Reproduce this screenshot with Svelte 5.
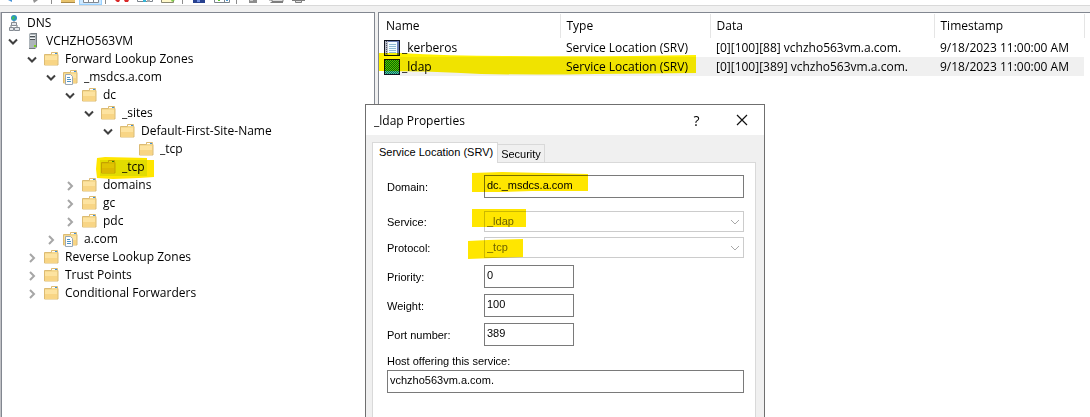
<script lang="ts">
  interface TreeNode {
    label: string;
    level: number;
    icon: 'dns' | 'server' | 'folder' | 'zone';
    open?: boolean;
    marked?: boolean;
  }

  interface DnsRecord {
    name: string;
    type: string;
    data: string;
    timestamp: string;
    selected?: boolean;
  }

  const nodes: TreeNode[] = [
    { label: 'DNS', level: 0, icon: 'dns' },
    { label: 'VCHZHO563VM', level: 1, icon: 'server', open: true },
    { label: 'Forward Lookup Zones', level: 2, icon: 'folder', open: true },
    { label: '_msdcs.a.com', level: 3, icon: 'zone', open: true },
    { label: 'dc', level: 4, icon: 'folder', open: true },
    { label: '_sites', level: 5, icon: 'folder', open: true },
    { label: 'Default-First-Site-Name', level: 6, icon: 'folder', open: true },
    { label: '_tcp', level: 7, icon: 'folder' },
    { label: '_tcp', level: 5, icon: 'folder', marked: true },
    { label: 'domains', level: 4, icon: 'folder', open: false },
    { label: 'gc', level: 4, icon: 'folder', open: false },
    { label: 'pdc', level: 4, icon: 'folder', open: false },
    { label: 'a.com', level: 3, icon: 'zone', open: false },
    { label: 'Reverse Lookup Zones', level: 2, icon: 'folder', open: false },
    { label: 'Trust Points', level: 2, icon: 'folder', open: false },
    { label: 'Conditional Forwarders', level: 2, icon: 'folder', open: false },
  ];

  const records: DnsRecord[] = [
    {
      name: '_kerberos',
      type: 'Service Location (SRV)',
      data: '[0][100][88] vchzho563vm.a.com.',
      timestamp: '9/18/2023 11:00:00 AM',
    },
    {
      name: '_ldap',
      type: 'Service Location (SRV)',
      data: '[0][100][389] vchzho563vm.a.com.',
      timestamp: '9/18/2023 11:00:00 AM',
      selected: true,
    },
  ];

  let domain = $state('dc._msdcs.a.com');
  let priority = $state('0');
  let weight = $state('100');
  let port = $state('389');
  let host = $state('vchzho563vm.a.com.');
</script>

{#snippet nodeIcon(kind: TreeNode['icon'])}
  <svg class="node-icon" width="16" height="16" viewBox="0 0 16 16" aria-hidden="true">
    {#if kind === 'dns'}
      <circle cx="9" cy="3" r="3" fill="#2b8fc4" />
      <path d="M7 2l2-1 1 1-1 2-2 1zM10 4l1-1v2z" fill="#3fbf5f" />
      <path d="M9 6v3M6 12v-2h6v2" fill="none" stroke="#777c82" />
      <path d="M6.500 7.500h5v3h-5zM4.500 12.500h4v3h-4zM9.500 12.500h5v3h-5z" fill="#e4e7eb" stroke="#858b93" />
    {:else if kind === 'server'}
      <path d="M5 1l2-1h6v14l-2 2H5z" fill="#747b80" />
      <path d="M5 1h7v14H5z" fill="#aeb5ba" />
      <path d="M6 2h5v1H6zM6 5h5v1H6z" fill="#f3f5f6" />
      <path d="M6 3h5v1H6zM6 6h5v1H6z" fill="#4b5054" />
      <path d="M10 12h2v2h-2z" fill="#7bd321" />
    {:else}
      <path d="M1.500 3.500h7v-2h6v2h.5v10.500H1.500z" fill="#f5d98f" stroke="#dcbb73" />
      <path d="M2 5h12v9H2z" fill="#fde3a0" />
      <path d="M2 9h12v5H2z" fill="#f8d585" />
      <path d="M9 2h5v1H9z" fill="#fff" />
      <path d="M12 2h2v1h-2z" fill="#3d8fd9" />
      {#if kind === 'zone'}
        <path d="M3.500 5.500h5l2 2v8h-7z" fill="#fff" stroke="#9aa8b5" />
        <path d="M5 8.500h3M5 10.500h4M5 12.500h4" stroke="#4b92c6" />
      {/if}
    {/if}
  </svg>
{/snippet}

<div class="console">
  <div class="toolbar" role="toolbar" aria-label="Console">
    <button aria-label="Back">
      <svg width="16" height="5"><path d="M2 0h4v2L2 0z" fill="#4a94d8" /></svg>
    </button>
    <button aria-label="Forward">
      <svg width="16" height="5"><path d="M4 0h5L5 3z" fill="#929292" /></svg>
    </button>
    <span class="sep"></span>
    <button aria-label="Up one level">
      <svg width="16" height="5"><path d="M1 0h14v3H1z" fill="#e8c36c" /><path d="M1 2h14v1H1z" fill="#a98845" /></svg>
    </button>
    <button class="pressed" aria-label="Show or hide console tree">
      <svg width="16" height="5"><path d="M.5 0v2.500h15V0M5.500 0v3M10.500 0v3" fill="#fff" stroke="#818890" /></svg>
    </button>
    <span class="sep"></span>
    <button aria-label="Delete">
      <svg width="16" height="5"><path d="M1 0h5l-1 2H3zM10 0h5l-1 2h-3z" fill="#d92727" /></svg>
    </button>
    <button aria-label="Properties">
      <svg width="16" height="5"><path d="M.5 0v1.500h15V0" fill="#fff" stroke="#7b838b" /><path d="M6 0h3v2H6z" fill="#34b4d5" /><path d="M10 0h3v2h-3z" fill="#aaa" /></svg>
    </button>
    <button aria-label="Export list">
      <svg width="16" height="5"><path d="M1.500 0v2.500h12V0" fill="#fff8ca" stroke="#8a8871" /><path d="M11 0h4l-3 2z" fill="#7ccb4c" /></svg>
    </button>
    <span class="sep"></span>
    <button aria-label="Help">
      <svg width="16" height="5"><path d="M2 0h12v3H2z" fill="#27418f" /><path d="M6 0h3v2H6z" fill="#718fe2" /></svg>
    </button>
    <button aria-label="New window">
      <svg width="16" height="5"><path d="M.5 0v2.500h15V0M10.500 0v3" fill="#fff" stroke="#7b838b" /><path d="M4 0h2v1H4z" fill="#5dcc26" /><path d="M12 0h2v1h-2z" fill="#4b9ad5" /></svg>
    </button>
    <span class="sep"></span>
    <button aria-label="Record">
      <svg width="16" height="5"><path d="M4 0h8v3H4z" fill="#8d8d8d" /><path d="M5 0h3v1H5z" fill="#ccc" /></svg>
    </button>
    <button aria-label="Zone">
      <svg width="16" height="5"><path d="M1 0h3v1.500h11V0M2.500 2.500H15" fill="#ddd" stroke="#7e7e7e" /></svg>
    </button>
    <button aria-label="Server">
      <svg width="16" height="5"><path d="M1 .5h13M4.500 0v2.500h6V0" fill="#ddd" stroke="#7e7e7e" /></svg>
    </button>
  </div>

  <div class="panes">
    <ul class="tree" role="tree">
      {#each nodes as node}
        <li
          role="treeitem"
          aria-selected={node.marked ?? false}
          aria-expanded={node.open}
          style="padding-left: {node.level === 0 ? 3 : node.level * 19 - 16}px"
        >
          {#if node.level > 0}
            <svg class="chevron" width="16" height="16" viewBox="0 0 16 16" aria-hidden="true">
              {#if node.open}
                <path d="M4 6.500l4 4 4-4" stroke="#404040" />
              {:else if node.open === false}
                <path d="M6 5l4 4-4 4" stroke="#a6a6a6" />
              {/if}
            </svg>
          {/if}
          <span class="node">
            {@render nodeIcon(node.icon)}
            <span class="label">{node.label}</span>
            {#if node.marked}
              <svg class="marker tree-marker" viewBox="0 0 58 22" preserveAspectRatio="none" aria-hidden="true">
                <path d="M1 1l8-1 42 1v2h7v17l-15 1-26 1-16-1-1-9z" fill="#ffe600" />
                <path d="M4 3h47v16H4z" fill="#e2dc00" />
              </svg>
            {/if}
          </span>
        </li>
      {/each}
    </ul>

    <div class="list">
      <table>
        <thead>
          <tr>
            <th class="col-name">Name</th>
            <th class="col-type">Type</th>
            <th class="col-data">Data</th>
            <th class="col-time">Timestamp</th>
          </tr>
        </thead>
        <tbody>
          {#each records as record}
            <tr class:selected={record.selected}>
              <td class="name">
                <span class="record">
                  <svg width="16" height="16" viewBox="0 0 16 16" aria-hidden="true">
                    <path d="M0 0h16v16H0z" fill="#10131f" />
                    <path d="M1 1h14v14H1z" fill="#6d7fb5" />
                    <path d="M4 2h9v13H4z" fill="#f4fbff" />
                    <path d="M1 1h3v14H1z" fill="#b9bdc9" />
                    <path d="M5 4.500h7M5 6.500h7M5 8.500h7M5 10.500h7M5 12.500h7" stroke="#8fb9d3" />
                    <path d="M2.500 1v14" stroke="#4d5164" stroke-dasharray="1 1" />
                    {#if record.selected}
                      <path d="M1 1h14v14H1z" fill="#5fc0a0" />
                      {#each [1, 3, 5, 7, 9, 11, 13] as y}
                        <path d="M1 {y + 0.5}h14M2 {y + 1.5}h13" stroke="#00785f" stroke-dasharray="1 1" />
                      {/each}
                    {/if}
                  </svg>
                  <span>{record.name}</span>
                </span>
                {#if record.selected}
                  <svg class="marker row-marker" viewBox="0 0 317 22" preserveAspectRatio="none" aria-hidden="true">
                    <path d="M0 0h20q50 3 105 3 100 1 192-1v18l-100 1q-60 1-115 0-50-3-102-3z" fill="#fff200" />
                  </svg>
                {/if}
              </td>
              <td>{record.type}</td>
              <td>{record.data}</td>
              <td>{record.timestamp}</td>
            </tr>
          {/each}
        </tbody>
      </table>
    </div>
  </div>

  <div class="dialog" role="dialog" aria-labelledby="dialog-title">
    <header>
      <h1 id="dialog-title">_ldap Properties</h1>
      <button class="caption" aria-label="Help">?</button>
      <button class="caption" aria-label="Close">
        <svg width="12" height="12" viewBox="0 0 12 12">
          <path d="M1 1l10 10M11 1L1 11" stroke="#111" stroke-width="1.200" />
        </svg>
      </button>
    </header>

    <div class="body">
      <div class="tabs" role="tablist">
        <button class="tab active" role="tab" aria-selected="true">Service Location (SRV)</button>
        <button class="tab" role="tab" aria-selected="false">Security</button>
      </div>

      <div class="page" role="tabpanel">
        <div class="row domain">
          <label for="domain">Domain:</label>
          <div class="field wide">
            <input id="domain" type="text" bind:value={domain} />
            <svg class="marker domain-marker" viewBox="0 0 116 20" preserveAspectRatio="none" aria-hidden="true">
              <path d="M0 1l30-1 86 2v17H60L30 20H0z" fill="#ffe600" />
            </svg>
          </div>
        </div>
        <div class="row combo">
          <label for="service">Service:</label>
          <div class="field wide">
            <select id="service" disabled><option>_ldap</option></select>
            <svg class="arrow" width="10" height="6" viewBox="0 0 10 6" aria-hidden="true">
              <path d="M1 1l4 4 4-4" />
            </svg>
            <svg class="marker service-marker" viewBox="0 0 54 18" preserveAspectRatio="none" aria-hidden="true">
              <path d="M0 0h54v18H0z" fill="#ffe600" />
            </svg>
          </div>
        </div>
        <div class="row combo protocol">
          <label for="protocol">Protocol:</label>
          <div class="field wide">
            <select id="protocol" disabled><option>_tcp</option></select>
            <svg class="arrow" width="10" height="6" viewBox="0 0 10 6" aria-hidden="true">
              <path d="M1 1l4 4 4-4" />
            </svg>
            <svg class="marker protocol-marker" viewBox="0 0 55 20" preserveAspectRatio="none" aria-hidden="true">
              <path d="M0 2l20-1 35-1v18l-30 1-25 1z" fill="#ffe600" />
            </svg>
          </div>
        </div>
        <div class="row">
          <label for="priority">Priority:</label>
          <div class="field"><input id="priority" type="text" bind:value={priority} /></div>
        </div>
        <div class="row">
          <label for="weight">Weight:</label>
          <div class="field"><input id="weight" type="text" bind:value={weight} /></div>
        </div>
        <div class="row">
          <label for="port">Port number:</label>
          <div class="field"><input id="port" type="text" bind:value={port} /></div>
        </div>
        <div class="host">
          <label for="host">Host offering this service:</label>
          <input id="host" type="text" bind:value={host} />
        </div>
      </div>
    </div>
  </div>
</div>

<style>
  :global(body) {
    margin: 0;
  }

  .console {
    position: relative;
    display: flex;
    flex-direction: column;
    height: 100vh;
    overflow: hidden;
    background: #f0f0f0;
    color: #000000;
    font-family: 'Open Sans', 'Noto Sans', sans-serif;
    font-size: 12px;
  }

  .console * {
    box-sizing: border-box;
  }

  button {
    padding: 0;
    border: none;
    background: none;
    color: inherit;
    font: inherit;
  }

  .toolbar {
    display: flex;
    flex-shrink: 0;
    height: 6px;
    padding-left: 2px;
    overflow: hidden;
    background: #ffffff;
    border-bottom: 1px solid #d9d9d9;
  }

  .toolbar button {
    display: flex;
    justify-content: center;
    width: 23px;
    height: 5px;
  }

  .toolbar .pressed {
    background: #cce8ff;
    border: solid #99d1ff;
    border-width: 0 1px 1px;
  }

  .sep {
    width: 1px;
    height: 4px;
    margin: 0 4px 0 3px;
    background: #8d8d8d;
  }

  .panes {
    display: flex;
    flex: 1;
    gap: 3px;
    min-height: 0;
    margin-top: 6px;
    padding-left: 1px;
    background: linear-gradient(to right, #c0c1c5 1px, #f0f0f0 1px);
  }

  .tree {
    flex: 0 0 374px;
    margin: 0;
    padding: 1px 0 0;
    overflow: hidden;
    list-style: none;
    background: #ffffff;
    border: 1px solid #828790;
    border-bottom: none;
  }

  .tree li {
    display: flex;
    align-items: center;
    gap: 3px;
    height: 18px;
  }

  .node {
    position: relative;
    display: flex;
    align-items: center;
    gap: 6px;
  }

  .label {
    line-height: 18px;
    white-space: nowrap;
  }

  .chevron {
    fill: none;
    stroke-width: 2;
  }

  .marker {
    position: absolute;
    mix-blend-mode: multiply;
    pointer-events: none;
  }

  .tree-marker {
    left: -4px;
    top: -1px;
    width: 58px;
    height: 22px;
  }

  .list {
    flex: 1;
    min-width: 0;
    padding-top: 1px;
    overflow: hidden;
    background: #ffffff;
    border: solid #828790;
    border-width: 1px 0 0 1px;
  }

  table {
    border-collapse: collapse;
    table-layout: fixed;
    width: 705px;
  }

  th,
  td {
    height: 19px;
    padding: 0 0 0 6px;
    line-height: 18px;
    font-weight: 400;
    text-align: left;
    white-space: nowrap;
  }

  th {
    height: 24px;
    border-right: 1px solid #e5e5e5;
  }

  .col-name {
    width: 181px;
    padding-left: 7px;
  }

  .col-type {
    width: 150px;
  }

  .col-data {
    width: 224px;
  }

  .col-time {
    width: 150px;
  }

  .selected td {
    background: #f0f0f0;
  }

  td.name {
    position: relative;
    padding-left: 5px;
  }

  .selected td.name {
    background: linear-gradient(to right, #ffffff 21px, #f0f0f0 21px);
  }

  .record {
    display: flex;
    align-items: center;
    gap: 2px;
  }

  .row-marker {
    z-index: 1;
    left: 0;
    top: -4px;
    width: 317px;
    height: 22px;
  }

  .dialog {
    position: absolute;
    z-index: 2;
    left: 365px;
    top: 104px;
    bottom: 0;
    display: flex;
    flex-direction: column;
    width: 400px;
    background: #f0f0f0;
    border: 1px solid #6f6f6f;
    border-bottom: none;
  }

  header {
    display: flex;
    align-items: center;
    height: 30px;
    padding-left: 8px;
    background: #ffffff;
  }

  h1 {
    flex: 1;
    margin: 0;
    font-size: 12px;
    font-weight: 400;
  }

  .caption {
    display: flex;
    align-items: center;
    justify-content: center;
    width: 45px;
    height: 30px;
    font-size: 14px;
  }

  .body {
    display: flex;
    flex: 1;
    flex-direction: column;
    padding: 7px 8px 0 6px;
    font-family: 'Liberation Sans', Arial, sans-serif;
    font-size: 11px;
  }

  .tabs {
    display: flex;
    align-items: flex-end;
  }

  .tab {
    height: 18px;
    padding: 0 3px;
    background: #f0f0f0;
    border: 1px solid #d9d9d9;
    border-width: 1px 1px 0 0;
  }

  .tab.active {
    z-index: 1;
    height: 21px;
    margin-bottom: -1px;
    padding: 0 4px 2px 6px;
    background: #ffffff;
    border-left-width: 1px;
  }

  .page {
    flex: 1;
    padding: 12px 11px 0 14px;
    background: #ffffff;
    border: 1px solid #d9d9d9;
    border-bottom: none;
  }

  .row {
    display: flex;
    align-items: center;
    margin-bottom: 6px;
  }

  .row label {
    flex: 0 0 97px;
  }

  .domain {
    margin-bottom: 13px;
  }

  .combo {
    margin-bottom: 5px;
  }

  .protocol {
    margin-bottom: 7px;
  }

  .field {
    position: relative;
    display: flex;
    width: 90px;
  }

  .field.wide {
    flex: 1;
  }

  input,
  select {
    width: 100%;
    height: 23px;
    margin: 0;
    padding: 0 2px 3px;
    border: 1px solid #7a7a7a;
    border-radius: 0;
    outline: none;
    background: #ffffff;
    color: #000000;
    font: inherit;
  }

  select {
    height: 21px;
    padding: 0 2px 2px;
    border-color: #cccccc;
    appearance: none;
  }

  select:disabled {
    color: #6d6d6d;
    opacity: 1;
  }

  .arrow {
    position: absolute;
    right: 4px;
    top: 8px;
    fill: none;
    stroke: #a8a8a8;
  }

  .domain-marker {
    left: -12px;
    top: -3px;
    width: 116px;
    height: 20px;
  }

  .service-marker {
    left: -12px;
    top: -2px;
    width: 54px;
    height: 18px;
  }

  .protocol-marker {
    left: -16px;
    top: 2px;
    width: 55px;
    height: 20px;
  }

  .host {
    display: flex;
    flex-direction: column;
    gap: 2px;
  }

  .host label {
    padding-top: 3px;
    line-height: 13px;
  }
</style>
